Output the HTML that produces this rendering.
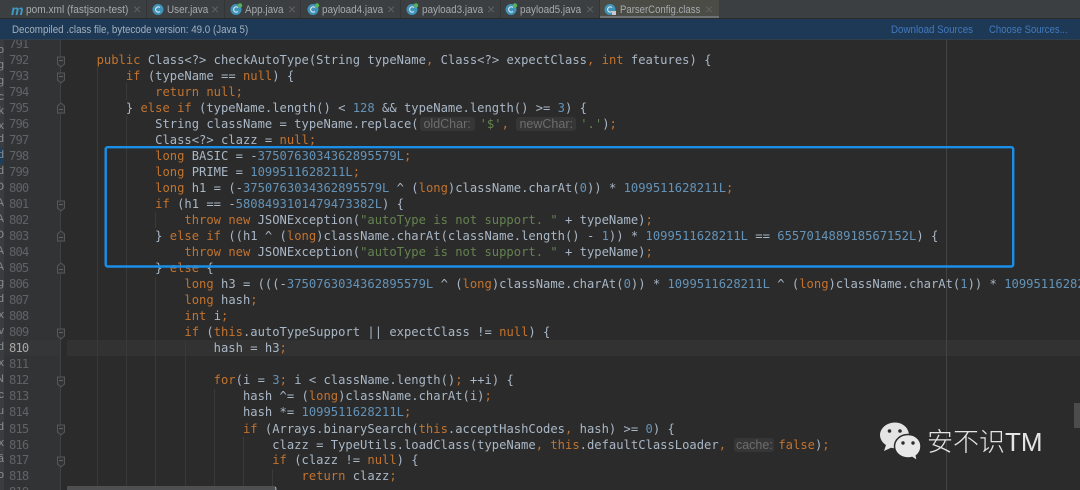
<!DOCTYPE html>
<html><head><meta charset="utf-8">
<style>
html,body{margin:0;padding:0;background:#2b2b2b}
#r{position:relative;width:1080px;height:490px;overflow:hidden;background:#2b2b2b;font-family:"Liberation Sans",sans-serif}
#tabs{position:absolute;left:0;top:0;width:1080px;height:18px;background:#3c3f41}
.t{position:absolute;top:3px;font-size:11px;line-height:14px;color:#a7abad;white-space:nowrap;filter:blur(.25px);transform-origin:0 50%;transform:scaleX(.9)}
.x{position:absolute;top:1px;font-size:14px;line-height:16px;color:#5f6264}
.sep{position:absolute;top:0;width:1px;height:18px;background:#333537}
#bar{position:absolute;left:0;top:19px;width:1080px;height:20px;background:#1e3956;border-bottom:1px solid #33404c}
#bar span{position:absolute;top:4px;font-size:10.8px;line-height:14px;white-space:nowrap;filter:blur(.25px);transform-origin:0 50%;transform:scaleX(.905)}
#gut{position:absolute;left:0;top:40px;width:60px;height:450px;background:#313335}
#side{position:absolute;left:0;top:40px;width:4px;height:450px;background:#3a3d3f}
#sidetext{position:absolute;left:0;top:0;width:4px;height:490px;overflow:hidden}
#sidetext span{position:absolute;right:0;font-size:11px;line-height:14px;color:#8a8d8f;white-space:nowrap}
#code{position:absolute;left:0;top:40px;width:1080px;height:450px;overflow:hidden}
.l,.g{position:absolute;white-space:pre;font-family:"DejaVu Sans Mono","Liberation Mono",monospace;font-size:12.17px;line-height:16px;height:16px;filter:blur(.35px)}
.l{left:67.3px;color:#a9b7c6}
.g{left:9px;color:#606365;letter-spacing:-.85px}
.k{color:#c2732f}.n{color:#6393b8}.s{color:#64824f}
.h{display:inline-block;font-family:"Liberation Sans",sans-serif;font-size:12.5px;line-height:14px;height:14px;color:#6d6d6d;background:#363636;border-radius:3px;text-align:center;box-sizing:border-box;vertical-align:top;margin-top:1px}
#wm{position:absolute;left:927px;top:425px;font-family:"Liberation Sans","Noto Sans CJK SC",sans-serif;font-size:26px;line-height:34px;color:#e4e4e4;white-space:nowrap;font-weight:300}
</style></head><body><div id="r">
<div id="tabs">
<div style="position:absolute;left:600px;top:0;width:119px;height:18px;background:#4b4c46;border-bottom:0"></div>
<div style="position:absolute;left:600px;top:16px;width:119px;height:2px;background:#6f7274"></div>
<div class="sep" style="left:146px"></div><div class="sep" style="left:224px"></div><div class="sep" style="left:300px"></div><div class="sep" style="left:400px"></div><div class="sep" style="left:500px"></div><div class="sep" style="left:599px"></div>
<span class="t" style="left:11px;color:#3d9ac4;font-style:italic;font-weight:bold;font-size:14px;transform:none">m</span>
<span class="t" style="left:26px;transform:scaleX(.92)">pom.xml (fastjson-test)</span><span class="x" style="left:133px">×</span>
<span class="t" style="left:167px">User.java</span><span class="x" style="left:211px">×</span>
<span class="t" style="left:245px">App.java</span><span class="x" style="left:288px">×</span>
<span class="t" style="left:322px">payload4.java</span><span class="x" style="left:387px">×</span>
<span class="t" style="left:422px">payload3.java</span><span class="x" style="left:487px">×</span>
<span class="t" style="left:520px">payload5.java</span><span class="x" style="left:586px">×</span>
<span class="t" style="left:620px;transform:scaleX(.87)">ParserConfig.class</span><span class="x" style="left:705px">×</span>
<svg width="1080" height="18" style="position:absolute;left:0;top:0" fill="none">
<g stroke-width="0">
<circle cx="158" cy="9.5" r="5.5" fill="#3f93b8"/><circle cx="236" cy="9.5" r="5.5" fill="#3f93b8"/><circle cx="313" cy="9.5" r="5.5" fill="#3f93b8"/><circle cx="412" cy="9.5" r="5.5" fill="#3f93b8"/><circle cx="511" cy="9.5" r="5.5" fill="#3f93b8"/><circle cx="610" cy="9.5" r="5.5" fill="#3f93b8"/>
</g>
<g stroke="#d4e4ec" stroke-width="1.2"><path d="M160 7.6a2.6 2.6 0 1 0 0 3.8"/><path d="M238 7.6a2.6 2.6 0 1 0 0 3.8"/><path d="M315 7.6a2.6 2.6 0 1 0 0 3.8"/><path d="M414 7.6a2.6 2.6 0 1 0 0 3.8"/><path d="M513 7.6a2.6 2.6 0 1 0 0 3.8"/><path d="M612 7.6a2.6 2.6 0 1 0 0 3.8"/></g>
<g fill="#57b35a"><circle cx="240" cy="5.500" r="2.200"/><circle cx="317" cy="5.500" r="2.200"/><circle cx="416" cy="5.500" r="2.200"/><circle cx="515" cy="5.500" r="2.200"/></g>
<rect x="612" y="11" width="4" height="4" fill="#c9cccd"/>
</svg>
</div>
<div id="bar"><span style="left:12px;color:#a2b0bc">Decompiled .class file, bytecode version: 49.0 (Java 5)</span><span style="left:891px;color:#4279bd">Download Sources</span><span style="left:989px;color:#4279bd;transform:scaleX(.885)">Choose Sources...</span></div>
<div id="gut"></div>
<div style="position:absolute;left:67px;top:340px;width:1013px;height:16px;background:#323232"></div>
<div style="position:absolute;left:4px;top:340px;width:56px;height:16px;background:#343638"></div>
<div id="side"></div>
<div style="position:absolute;left:0;top:148px;width:4px;height:16px;background:#1e3f5c"></div>
<div id="sidetext"><span style="top:43px">o</span><span style="top:58px">g</span><span style="top:74px">g</span><span style="top:90px">c</span><span style="top:104px">k</span><span style="top:119px">x</span><span style="top:132px">d</span><span style="top:148px">d</span><span style="top:164px">d</span><span style="top:180px">O</span><span style="top:196px">A</span><span style="top:212px">A</span><span style="top:228px">O</span><span style="top:244px">A</span><span style="top:260px">A</span><span style="top:276px">g</span><span style="top:292px">d</span><span style="top:308px">x</span><span style="top:324px">v</span><span style="top:340px">d</span><span style="top:356px">x</span><span style="top:372px">N</span><span style="top:388px">c</span><span style="top:404px">u</span><span style="top:420px">d</span><span style="top:436px">x</span><span style="top:452px">ã</span><span style="top:468px">o</span></div>
<svg width="1080" height="490" style="position:absolute;left:0;top:0" fill="none">
<path d="M60.500 40V490" stroke="#3f4143"/>
<g stroke="#3a3a3a"><path d="M97.500 67V490M126.500 83V100M126.500 116V490M155.500 212V228M155.500 277V490M185.500 341V490M214.500 389V490M243.500 437V490M272.500 469V490"/></g>
<path d="M946.500 40V490" stroke="#444"/>
<g fill="#313335" stroke="#555759"><path d="M57.500 57h7v7l-3.500 3-3.500-3z"/><path d="M57.500 73h7v7l-3.500 3-3.500-3z"/><path d="M57.500 113h7v-7l-3.500-3-3.500 3z"/><path d="M57.500 201h7v7l-3.500 3-3.500-3z"/><path d="M57.500 241h7v-7l-3.500-3-3.500 3z"/><path d="M57.500 273h7v-7l-3.500-3-3.500 3z"/><path d="M57.500 329h7v7l-3.500 3-3.500-3z"/><path d="M57.500 377h7v7l-3.500 3-3.500-3z"/><path d="M57.500 425h7v7l-3.500 3-3.500-3z"/><path d="M57.500 457h7v7l-3.500 3-3.500-3z"/></g>
<g stroke="#606264"><path d="M59 60.500h4M59 76.500h4M59 109.500h4M59 204.500h4M59 237.500h4M59 269.500h4M59 332.500h4M59 380.500h4M59 428.500h4M59 460.500h4"/></g>
</svg>
<div id="code" style="top:0;height:490px;clip-path:inset(40px 0 0 0)">
<div class="g" style="top:36px">791</div><div class="g" style="top:52px">792</div><div class="g" style="top:68px">793</div><div class="g" style="top:84px">794</div><div class="g" style="top:100px">795</div><div class="g" style="top:116px">796</div><div class="g" style="top:132px">797</div><div class="g" style="top:148px">798</div><div class="g" style="top:164px">799</div><div class="g" style="top:180px">800</div><div class="g" style="top:196px">801</div><div class="g" style="top:212px">802</div><div class="g" style="top:228px">803</div><div class="g" style="top:244px">804</div><div class="g" style="top:260px">805</div><div class="g" style="top:276px">806</div><div class="g" style="top:292px">807</div><div class="g" style="top:308px">808</div><div class="g" style="top:324px">809</div><div class="g" style="top:340px;color:#a8a8a6">810</div><div class="g" style="top:356px">811</div><div class="g" style="top:372px">812</div><div class="g" style="top:388px">813</div><div class="g" style="top:404px">814</div><div class="g" style="top:421px">815</div><div class="g" style="top:437px">816</div><div class="g" style="top:452px">817</div><div class="g" style="top:468px">818</div><div class="g" style="top:484px">819</div>
<div class="l" style="top:52px">    <span class="k">public</span> Class&lt;?&gt; checkAutoType(String typeName<span class="k">,</span> Class&lt;?&gt; expectClass<span class="k">,</span> <span class="k">int</span> features) {</div>
<div class="l" style="top:68px">        <span class="k">if</span> (typeName == <span class="k">null</span>) {</div>
<div class="l" style="top:84px">            <span class="k">return null;</span></div>
<div class="l" style="top:100px">        } <span class="k">else if</span> (typeName.length() &lt; <span class="n">128</span> &amp;&amp; typeName.length() &gt;= <span class="n">3</span>) {</div>
<div class="l" style="top:116px">            String className = typeName.replace(<span class="h" style="width:55px;margin-left:1px;margin-right:5px">oldChar:</span><span class="s">'$'</span><span class="k">,</span> <span class="h" style="width:60px;margin-right:4px">newChar:</span><span class="s">'.'</span>)<span class="k">;</span></div>
<div class="l" style="top:132px">            Class&lt;?&gt; clazz = <span class="k">null;</span></div>
<div class="l" style="top:148px">            <span class="k">long</span> BASIC = -<span class="n">3750763034362895579L</span><span class="k">;</span></div>
<div class="l" style="top:164px">            <span class="k">long</span> PRIME = <span class="n">1099511628211L</span><span class="k">;</span></div>
<div class="l" style="top:180px">            <span class="k">long</span> h1 = (-<span class="n">3750763034362895579L</span> ^ (<span class="k">long</span>)className.charAt(<span class="n">0</span>)) * <span class="n">1099511628211L</span><span class="k">;</span></div>
<div class="l" style="top:196px">            <span class="k">if</span> (h1 == -<span class="n">5808493101479473382L</span>) {</div>
<div class="l" style="top:212px">                <span class="k">throw new</span> JSONException(<span class="s">"autoType is not support. "</span> + typeName)<span class="k">;</span></div>
<div class="l" style="top:228px">            } <span class="k">else if</span> ((h1 ^ (<span class="k">long</span>)className.charAt(className.length() - <span class="n">1</span>)) * <span class="n">1099511628211L</span> == <span class="n">655701488918567152L</span>) {</div>
<div class="l" style="top:244px">                <span class="k">throw new</span> JSONException(<span class="s">"autoType is not support. "</span> + typeName)<span class="k">;</span></div>
<div class="l" style="top:260px">            } <span class="k">else</span> {</div>
<div class="l" style="top:276px">                <span class="k">long</span> h3 = (((-<span class="n">3750763034362895579L</span> ^ (<span class="k">long</span>)className.charAt(<span class="n">0</span>)) * <span class="n">1099511628211L</span> ^ (<span class="k">long</span>)className.charAt(<span class="n">1</span>)) * <span class="n">1099511628211L</span></div>
<div class="l" style="top:292px">                <span class="k">long</span> hash<span class="k">;</span></div>
<div class="l" style="top:308px">                <span class="k">int</span> i<span class="k">;</span></div>
<div class="l" style="top:324px">                <span class="k">if</span> (<span class="k">this</span>.autoTypeSupport || expectClass != <span class="k">null</span>) {</div>
<div class="l" style="top:340px">                    hash = h3<span class="k">;</span></div>
<div class="l" style="top:372px">                    <span class="k">for</span>(i = <span class="n">3</span><span class="k">;</span> i &lt; className.length()<span class="k">;</span> ++i) {</div>
<div class="l" style="top:388px">                        hash ^= (<span class="k">long</span>)className.charAt(i)<span class="k">;</span></div>
<div class="l" style="top:404px">                        hash *= <span class="n">1099511628211L</span><span class="k">;</span></div>
<div class="l" style="top:421px">                        <span class="k">if</span> (Arrays.binarySearch(<span class="k">this</span>.acceptHashCodes<span class="k">,</span> hash) &gt;= <span class="n">0</span>) {</div>
<div class="l" style="top:437px">                            clazz = TypeUtils.loadClass(typeName<span class="k">,</span> <span class="k">this</span>.defaultClassLoader<span class="k">,</span> <span class="h" style="width:40px;margin-left:1px;margin-right:4px">cache:</span><span class="k">false</span>)<span class="k">;</span></div>
<div class="l" style="top:452px">                            <span class="k">if</span> (clazz != <span class="k">null</span>) {</div>
<div class="l" style="top:468px">                                <span class="k">return</span> clazz<span class="k">;</span></div>
<div class="l" style="top:484px">                            }</div>
</div>
<div style="position:absolute;left:67px;top:486px;width:208px;height:4px;background:#4d4f50"></div>
<div style="position:absolute;left:1074px;top:403px;width:6px;height:25px;background:#4c4c4c"></div>
<svg width="1080" height="490" style="position:absolute;left:0;top:0" fill="none"><rect x="105.700" y="147.200" width="907.500" height="119.300" rx="2" stroke="#1b8fe8" stroke-width="2.400"/></svg>
<svg width="50" height="46" viewBox="0 0 50 46" style="position:absolute;left:878px;top:420px">
<path d="M17 2.500C9 2.500 2 8 2 15c0 4.200 2.500 7.800 6 10L6 31l7-3.200c1.300.3 2.600.5 4 .5 8 0 14-6 14-13S25 2.500 17 2.500z" fill="#e4e4e4"/>
<path d="M30 14.500c-7.500 0-13.500 5.200-13.500 11.800S22.500 38 30 38c1.500 0 2.800-.2 4-.6L39.500 41l-1.200-5.200c2.800-2.200 4.700-5.600 4.700-9.500C43 19.700 37.500 14.500 30 14.500z" fill="#e8e8e8" stroke="#2b2b2b" stroke-width="1.500"/>
<circle cx="11.500" cy="11" r="1.800" fill="#2b2b2b"/><circle cx="22" cy="11" r="1.800" fill="#2b2b2b"/><circle cx="25" cy="23" r="1.700" fill="#2b2b2b"/><circle cx="35" cy="23" r="1.700" fill="#2b2b2b"/>
</svg>
<div id="wm">安不识TM</div>
</div></body></html>
